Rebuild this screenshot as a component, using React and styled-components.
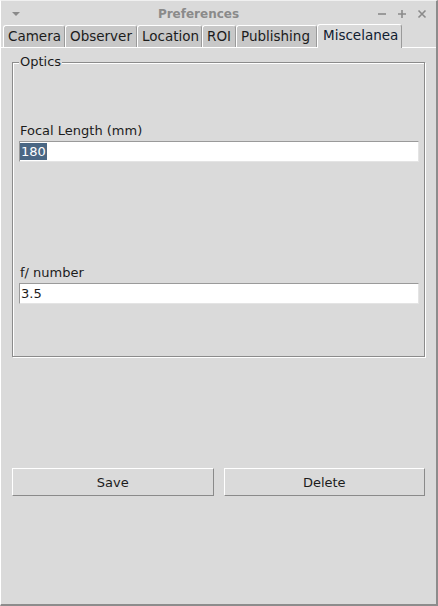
import React from "react";
import styled, { createGlobalStyle } from "styled-components";

const GlobalStyle = createGlobalStyle`
  html, body {
    margin: 0;
    padding: 0;
    background: #dadada;
  }
  * {
    box-sizing: border-box;
  }
`;

const Window = styled.div`
  width: 438px;
  height: 606px;
  background: #dadada;
  border-left: 1px solid #ffffff;
  border-top: 1px solid #f0f0f0;
  border-right: 2px solid #8c8c8c;
  border-bottom: 2px solid #8c8c8c;
  display: flex;
  flex-direction: column;
  font-family: "DejaVu Sans", "Noto Sans", sans-serif;
  font-size: 13px;
  color: #1c1c1c;
`;

const TitleBar = styled.div`
  height: 23px;
  display: flex;
  align-items: center;
  padding: 2px 8px 0 10px;
  color: #8a8a8a;
`;

const TitleText = styled.div`
  flex: 1;
  text-align: center;
  font-weight: bold;
  font-size: 12px;
`;

const TitleButtons = styled.div`
  display: flex;
  gap: 8px;
  align-items: center;
`;

const TabBar = styled.div`
  height: 24px;
  display: flex;
  align-items: flex-end;
  padding-left: 2px;
  border-bottom: 1px solid #ffffff;
`;

const Tab = styled.div`
  width: ${(p) => p.$w}px;
  height: ${(p) => (p.$active ? "24px" : "22px")};
  margin-bottom: ${(p) => (p.$active ? "-1px" : "0")};
  padding: ${(p) => (p.$active ? "0 0 3px 5px" : "0 0 1px 4px")};
  display: flex;
  align-items: center;
  background: ${(p) => (p.$active ? "#dadada" : "#c8c8c8")};
  border-top: 1px solid #ffffff;
  border-left: 1px solid #ffffff;
  border-right: 1px solid #9a9a9a;
  border-radius: 3px 3px 0 0;
  color: ${(p) => (p.$active ? "#102030" : "#1c1c1c")};
  font-size: 13.5px;
  white-space: nowrap;
`;

const Pane = styled.div`
  flex: 1;
  display: flex;
  flex-direction: column;
  padding: 14px 11px 0 11px;
`;

const Group = styled.div`
  position: relative;
  width: 413px;
  height: 295px;
  border: 1px solid #8b8b8b;
  box-shadow: 1px 1px 0 #ffffff, inset 1px 1px 0 #ffffff;
  padding: 60px 5px 0 6px;
  display: flex;
  flex-direction: column;
`;

const Legend = styled.div`
  position: absolute;
  top: -9px;
  left: 6px;
  padding: 0 1px;
  background: #dadada;
  line-height: 16px;
`;

const Field = styled.div`
  display: flex;
  flex-direction: column;
  margin-bottom: ${(p) => p.$after}px;
`;

const Label = styled.div`
  line-height: 16px;
  padding-left: 1px;
  margin-bottom: 2px;
`;

const Input = styled.div`
  height: 21px;
  background: #ffffff;
  border-top: 1px solid #9a9a9a;
  border-left: 1px solid #9a9a9a;
  border-bottom: 1px solid #e4e4e4;
  border-right: 1px solid #e4e4e4;
  display: flex;
  align-items: center;
  line-height: 17px;
`;

const Selected = styled.span`
  background: #4a6784;
  color: #ffffff;
  padding: 0 1px;
`;

const Plain = styled.span`
  padding-left: 1px;
`;

const ButtonRow = styled.div`
  margin-top: 111px;
  display: flex;
  gap: 10px;
`;

const Button = styled.div`
  width: 203px;
  height: 28px;
  display: flex;
  align-items: center;
  justify-content: center;
  border-top: 1px solid #ffffff;
  border-left: 1px solid #ffffff;
  border-right: 1px solid #8a8a8a;
  border-bottom: 1px solid #8a8a8a;
`;

const tabs = [
  { name: "Camera", w: 62 },
  { name: "Observer", w: 72 },
  { name: "Location", w: 65 },
  { name: "ROI", w: 34 },
  { name: "Publishing", w: 81 },
  { name: "Miscelanea", w: 85 },
];

export default function App() {
  return (
    <>
      <GlobalStyle />
      <Window>
        <TitleBar>
          <svg width="10" height="10" viewBox="0 0 10 10">
            <path d="M1 3 L9 3 L5 7 Z" fill="#8a8a8a" />
          </svg>
          <TitleText>Preferences</TitleText>
          <TitleButtons>
            <svg width="12" height="12" viewBox="0 0 12 12">
              <path d="M2 6 H10" stroke="#8a8a8a" strokeWidth="1.6" />
            </svg>
            <svg width="12" height="12" viewBox="0 0 12 12">
              <path d="M2 6 H10 M6 2 V10" stroke="#8a8a8a" strokeWidth="1.6" />
            </svg>
            <svg width="12" height="12" viewBox="0 0 12 12">
              <path d="M2.5 2.5 L9.5 9.5 M9.5 2.5 L2.5 9.5" stroke="#8a8a8a" strokeWidth="1.6" />
            </svg>
          </TitleButtons>
        </TitleBar>
        <TabBar>
          {tabs.map((t) => (
            <Tab key={t.name} $w={t.w} $active={t.name === "Miscelanea"}>
              {t.name}
            </Tab>
          ))}
        </TabBar>
        <Pane>
          <Group>
            <Legend>Optics</Legend>
            <Field $after={103}>
              <Label>Focal Length (mm)</Label>
              <Input>
                <Selected>180</Selected>
              </Input>
            </Field>
            <Field $after={0}>
              <Label>f/ number</Label>
              <Input>
                <Plain>3.5</Plain>
              </Input>
            </Field>
          </Group>
          <ButtonRow>
            <Button>Save</Button>
            <Button>Delete</Button>
          </ButtonRow>
        </Pane>
      </Window>
    </>
  );
}
